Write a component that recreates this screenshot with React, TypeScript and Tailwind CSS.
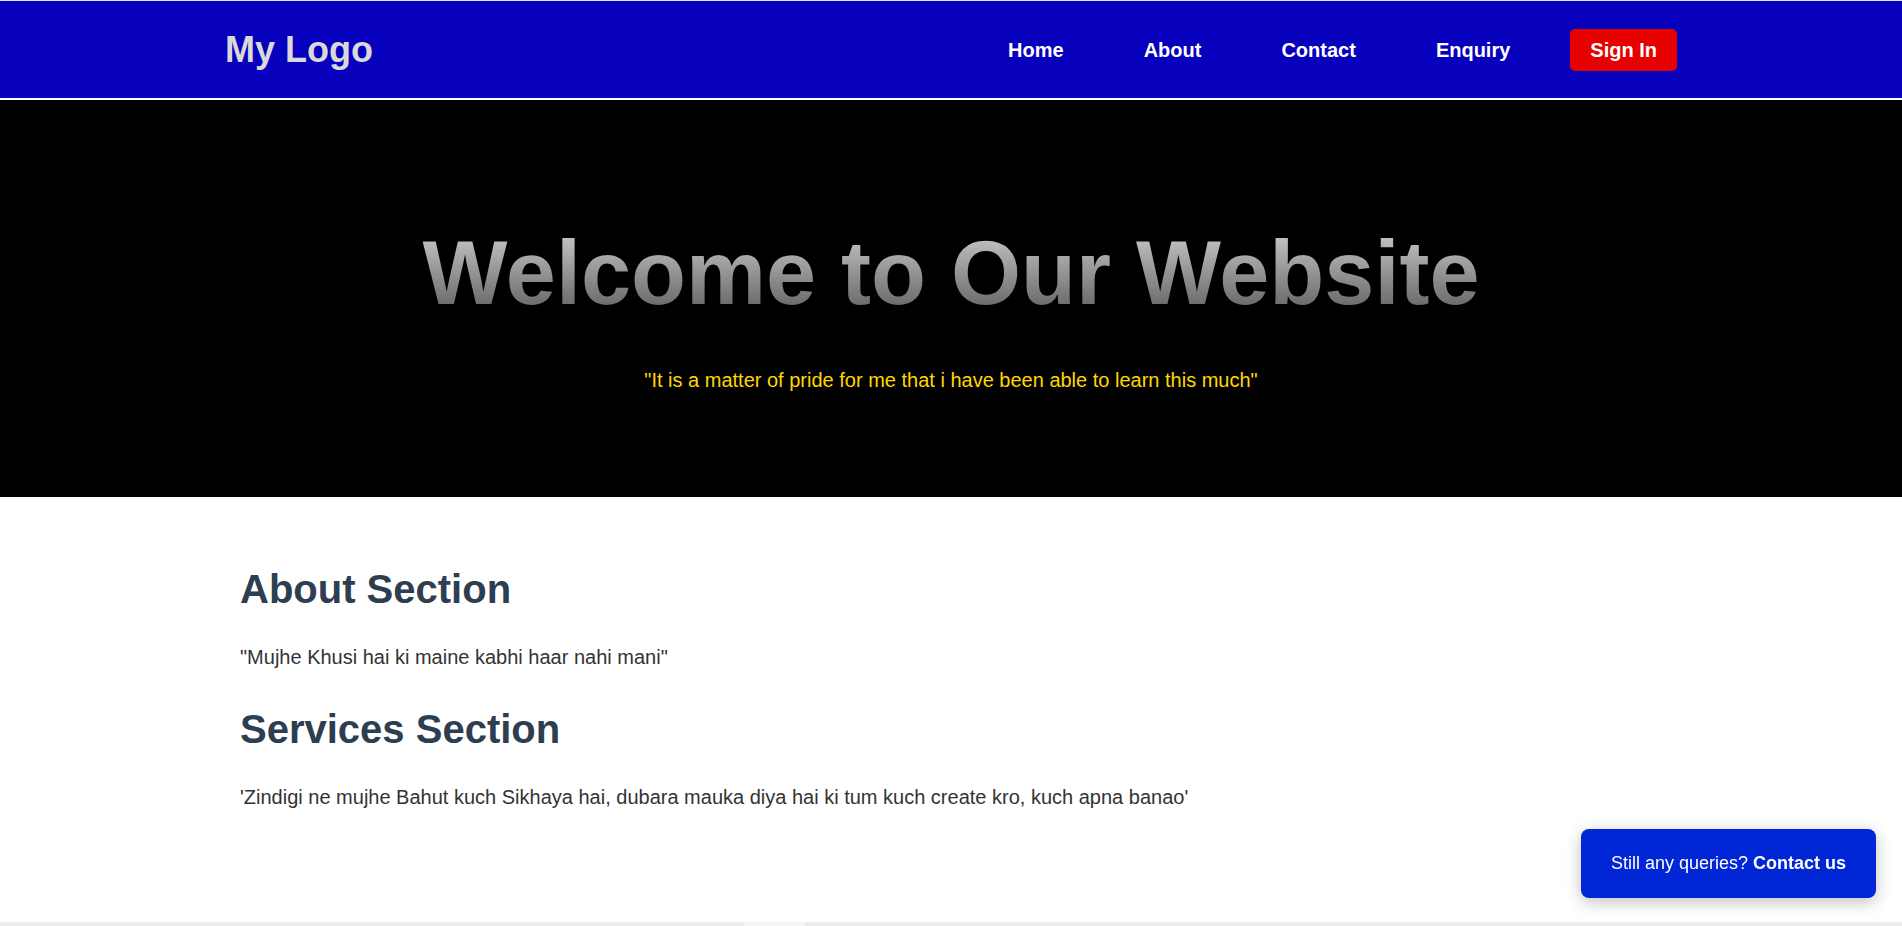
export default function App() {
  const font = { fontFamily: '"Liberation Sans", Arial, sans-serif' };
  return (
    <div className="h-[926px] overflow-hidden flex flex-col bg-white" style={font}>
      <nav className="h-[100px] shrink-0 bg-[#0700bd] border-t border-t-[#e8e8e8] border-b-2 border-b-white flex items-center">
        <div className="w-[1452px] mx-auto flex items-center justify-between">
          <div className="text-[36px] font-bold leading-[41px] text-[#d9d9d9]">My Logo</div>
          <ul className="flex items-center gap-[40px] text-white text-[20px] font-bold leading-[24px]">
            <li className="px-5">Home</li>
            <li className="px-5">About</li>
            <li className="px-5">Contact</li>
            <li className="px-5">Enquiry</li>
            <li className="px-5 py-[9px] bg-[#e60000] rounded-[5px]">Sign In</li>
          </ul>
        </div>
      </nav>
      <section className="h-[397px] shrink-0 bg-black flex flex-col items-center pt-[128px]">
        <h1
          className="text-[90px] leading-[90px] font-bold bg-gradient-to-b from-[#cdcdcd] to-[#5e5e5e] bg-clip-text text-transparent"
        >
          Welcome to Our Website
        </h1>
        <p className="mt-[50px] text-[20px] leading-[24px] text-[#ffd700]">
          "It is a matter of pride for me that i have been able to learn this much"
        </p>
      </section>
      <main className="flex-1">
        <div className="w-[1422px] mx-auto pt-[69px]">
          <h2 className="text-[40px] leading-[46px] font-bold text-[#2c3e50]">About Section</h2>
          <p className="mt-[34px] text-[20px] leading-[23px] text-[#333333]">
            "Mujhe Khusi hai ki maine kabhi haar nahi mani"
          </p>
          <h2 className="mt-[37px] text-[40px] leading-[46px] font-bold text-[#2c3e50]">Services Section</h2>
          <p className="mt-[34px] text-[20px] leading-[23px] text-[#333333]">
            'Zindigi ne mujhe Bahut kuch Sikhaya hai, dubara mauka diya hai ki tum kuch create kro, kuch apna banao'
          </p>
        </div>
      </main>
      <div className="h-[4px] shrink-0 bg-[#ebebeb] flex">
        <div className="w-[744px]" />
        <div className="w-[61px] bg-[#f5f5f5]" />
      </div>
      <div className="fixed right-[26px] bottom-[28px] w-[295px] h-[69px] rounded-[8px] bg-[#0026d6] flex items-center justify-center text-[18px] leading-[21px] text-white shadow-[0_4px_16px_rgba(0,0,0,0.25)]">
        <span>
          Still any queries? <span className="font-bold">Contact us</span>
        </span>
      </div>
    </div>
  );
}
